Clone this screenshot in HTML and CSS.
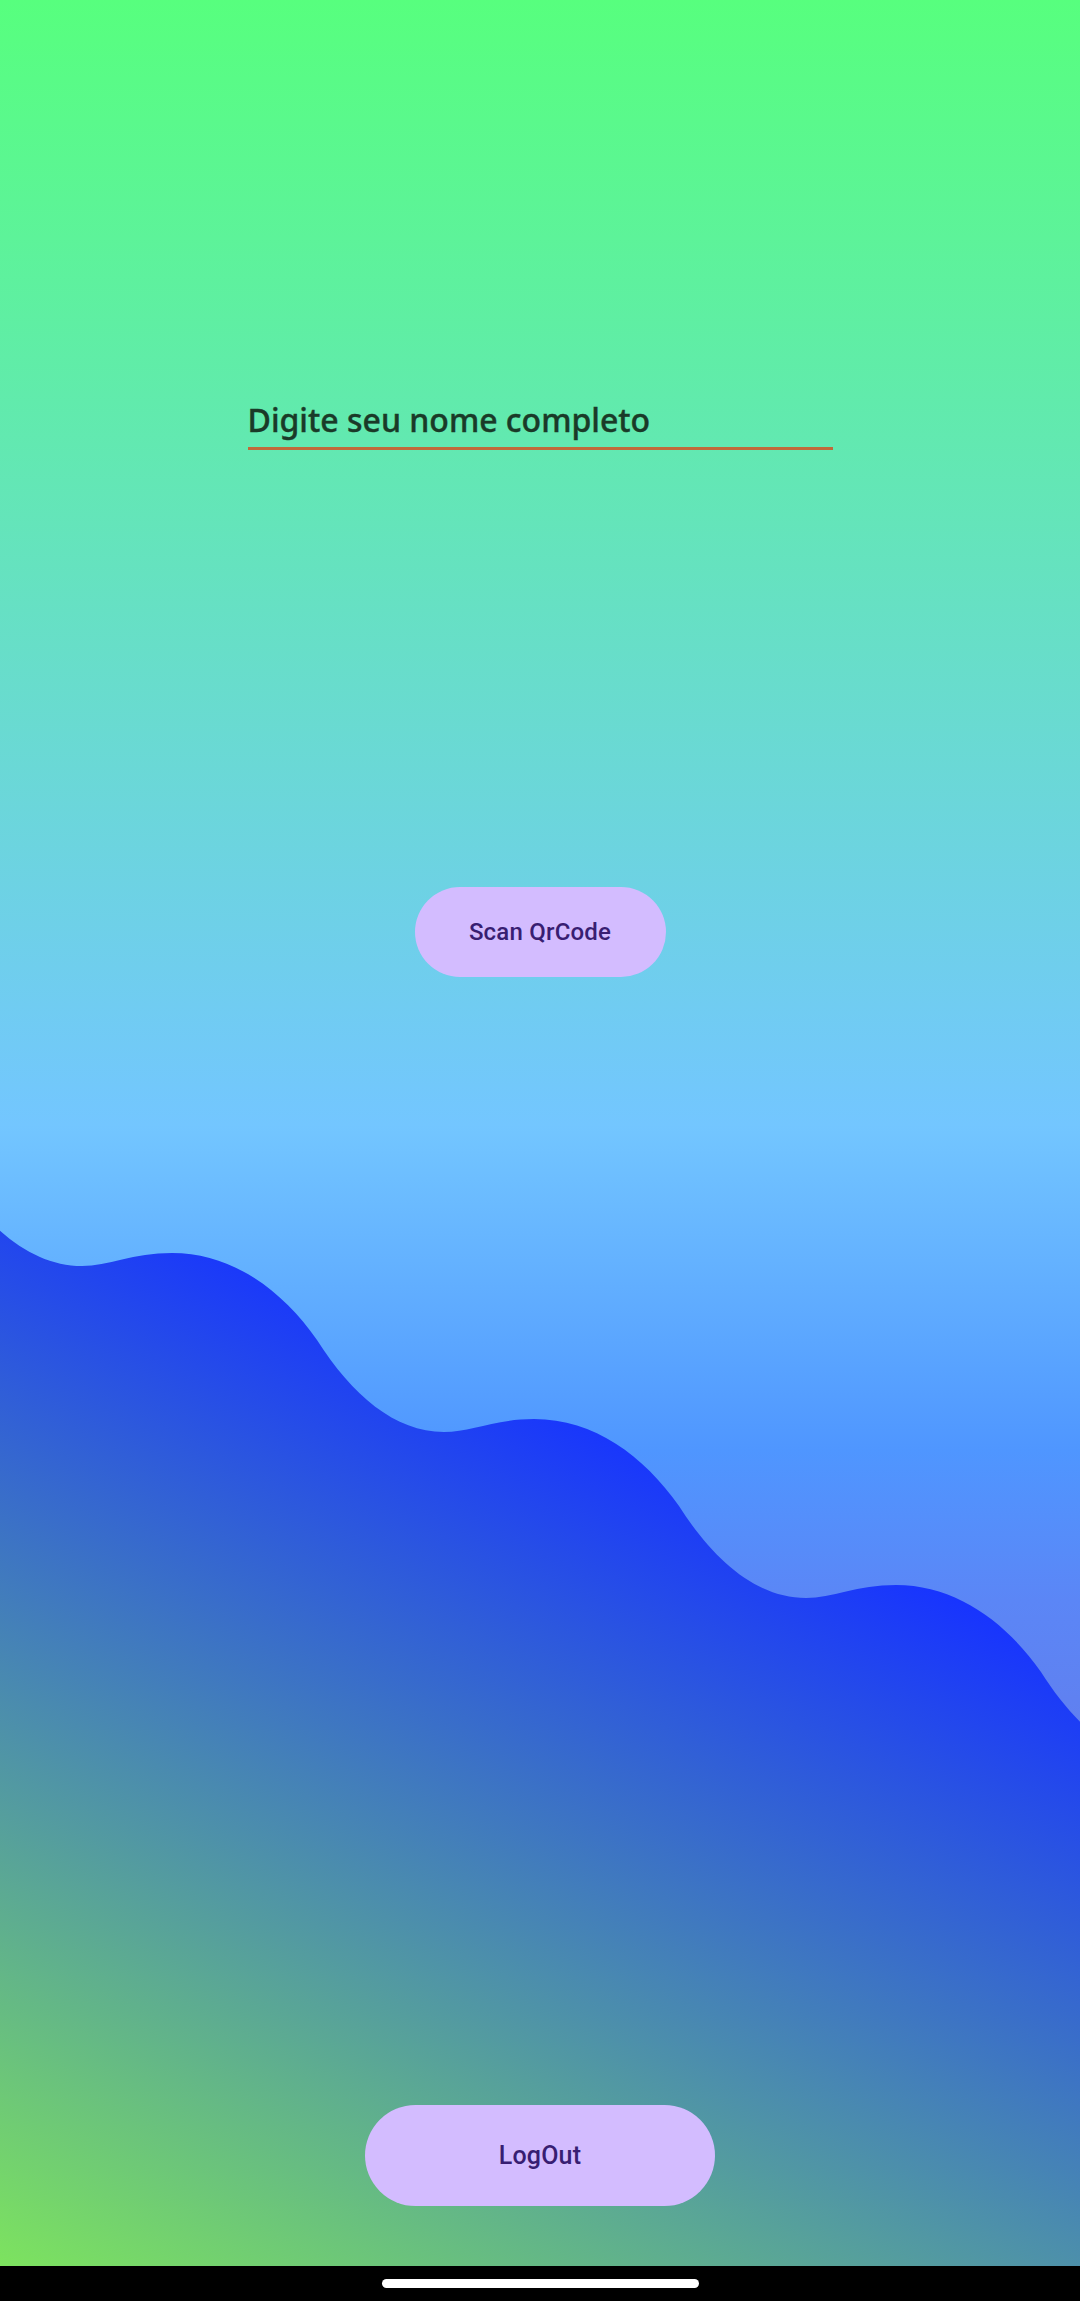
FILE: index.html
```html
<!DOCTYPE html>
<html lang="pt">
<head>
<meta charset="utf-8">
<title>Scan</title>
<link rel="stylesheet" href="styles.css">
</head>
<body>
<div class="screen">
  <div class="app">
    <svg class="wave" viewBox="0 0 1080 2266" width="1080" height="2266" aria-hidden="true">
      <defs>
        <linearGradient id="waveGrad" gradientUnits="userSpaceOnUse" x1="0" y1="2300" x2="480" y2="1351">
          <stop offset="0" stop-color="#80E85A"/>
          <stop offset="1" stop-color="#1733FF"/>
        </linearGradient>
      </defs>
      <path fill="url(#waveGrad)" d="M -47,1174 C -12,1229 33,1266 82,1266 C 108,1266 133,1253 172,1253 C 232,1253 282,1290 317,1340 C 352,1395 395,1432 444,1432 C 470,1432 495,1419 534,1419 C 594,1419 644,1456 679,1506 C 714,1561 757,1598 806,1598 C 832,1598 857,1585 896,1585 C 956,1585 1006,1622 1041,1672 C 1076,1727 1119,1764 1168,1764 L 1168,2300 L -47,2300 Z"/>
    </svg>
    <main class="content">
      <div class="field"><span class="field-text">Digite seu nome completo</span></div>
      <button class="btn btn-scan" type="button">Scan QrCode</button>
      <button class="btn btn-logout" type="button">LogOut</button>
    </main>
  </div>
  <div class="navbar"><div class="home-indicator"></div></div>
</div>
</body>
</html>
```
FILE: styles.css
```css
* { box-sizing: border-box; }

html, body {
  margin: 0;
  padding: 0;
  background: #000;
}

.screen {
  width: 1080px;
  height: 2301px;
  display: flex;
  flex-direction: column;
  overflow: hidden;
}

.app {
  position: relative;
  height: 2266px;
  flex: none;
  background: linear-gradient(180deg,
    #57FF7E 0px,
    #73C6FF 1125px,
    #4F96FF 1450px,
    #5B86F6 1600px,
    #6080F0 1720px,
    #6a74e8 2266px);
}

.wave {
  position: absolute;
  left: 0;
  top: 0;
  display: block;
}

.content {
  position: relative;
  z-index: 1;
  display: flex;
  flex-direction: column;
  align-items: center;
}

.field {
  margin-top: 398px;
  width: 585px;
  padding-bottom: 5px;
  border-bottom: 3px solid #c06a3a;
}

.field-text {
  display: block;
  font-family: "Noto Sans", "Open Sans", sans-serif;
  font-weight: 500;
  font-size: 32px;
  line-height: 44px;
  color: #1a3a28;
  -webkit-text-stroke: 0.4px #1a3a28;
  white-space: nowrap;
}

.btn {
  border: none;
  padding: 0;
  margin: 0;
  background: #D3BCFF;
  color: #381E72;
  font-family: Roboto, "Liberation Sans", sans-serif;
  font-weight: 500;
  letter-spacing: 0.2px;
  display: flex;
  align-items: center;
  justify-content: center;
}

.btn-scan {
  margin-top: 437px;
  width: 251px;
  height: 90px;
  border-radius: 45px;
  font-size: 24px;
}

.btn-logout {
  margin-top: 1128px;
  width: 350px;
  height: 101px;
  border-radius: 51px;
  font-size: 25px;
}

.navbar {
  flex: 1;
  background: #000;
  display: flex;
  justify-content: center;
  padding-top: 13px;
}

.home-indicator {
  width: 317px;
  height: 9px;
  border-radius: 5px;
  background: #fff;
}
```
